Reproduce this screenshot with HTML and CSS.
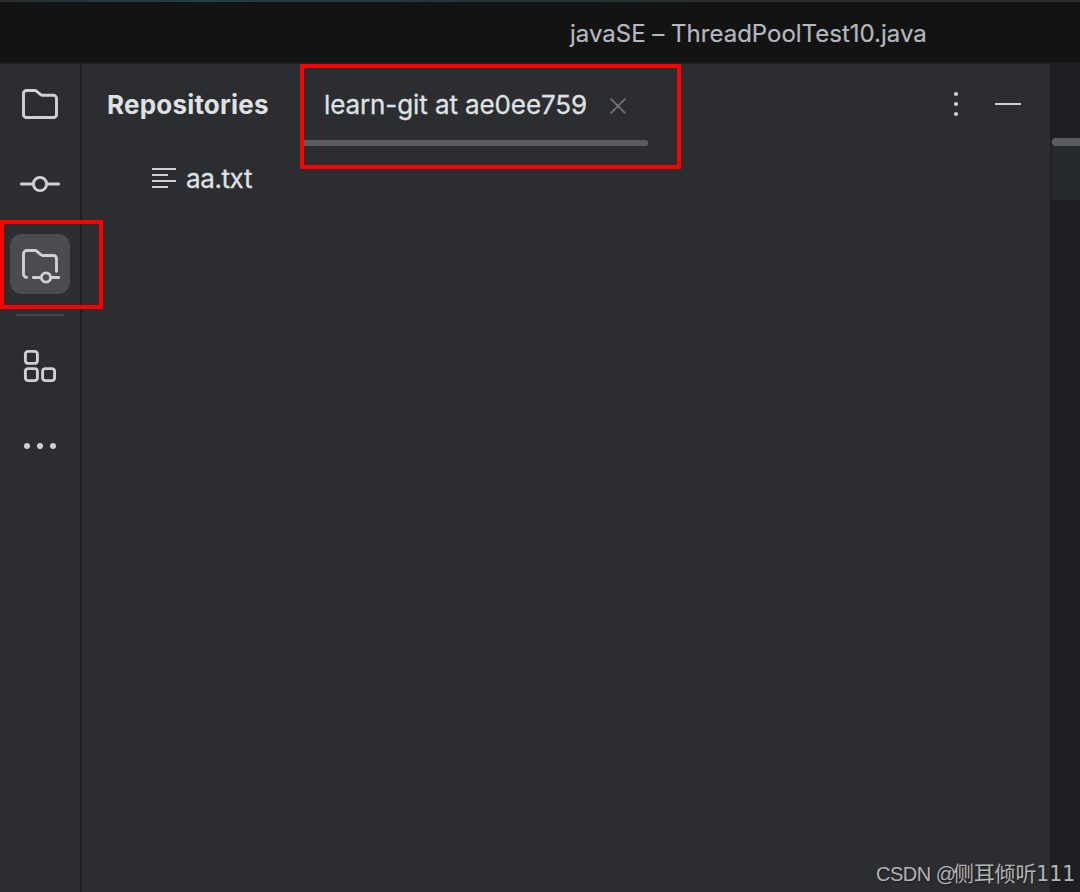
FILE: index.html
```html
<!DOCTYPE html>
<html lang="en">
<head>
<meta charset="utf-8">
<title>javaSE – ThreadPoolTest10.java</title>
<link rel="stylesheet" href="styles.css">
</head>
<body>
<div class="window">
  <header class="titlebar"><span class="title">javaSE – ThreadPoolTest10.java</span></header>
  <div class="workspace">
    <nav class="toolstrip">
      <div class="tool"><svg width="40" height="40" viewBox="0 0 40 40"><path d="M3.5 9.500a3 3 0 0 1 3-3h8.200a3 3 0 0 1 2 .8l4 3.300a3 3 0 0 0 1.800.7h11a3 3 0 0 1 3 3v16.200a3 3 0 0 1-3 3h-27a3 3 0 0 1-3-3z"/></svg></div>
      <div class="tool"><svg width="40" height="40" viewBox="0 0 40 40"><path d="M1.300 20H13M27 20h11.700"/><circle cx="20" cy="20" r="6.600"/></svg></div>
      <div class="tool selected"><svg width="40" height="40" viewBox="0 0 40 40"><path d="M6.700 33.400a3.500 3.500 0 0 1-3.200-3.600V9.800a3.300 3.300 0 0 1 3.300-3.300h8.100a3 3 0 0 1 2 .8l4.200 3.500a2.500 2.500 0 0 0 1.700.7h10.700a3 3 0 0 1 3 3v12.800M13.300 33.500h7M31.500 33.500h7.200"/><circle cx="26" cy="33.500" r="4.600"/></svg></div>
      <div class="separator"></div>
      <div class="tool"><svg width="40" height="40" viewBox="0 0 40 40"><rect x="5.400" y="5.400" width="12" height="12" rx="2.700"/><rect x="5.400" y="22.600" width="12" height="12" rx="2.700"/><rect x="22.600" y="22.600" width="12" height="12" rx="2.700"/></svg></div>
      <div class="tool"><svg class="solid" width="40" height="40" viewBox="0 0 40 40"><circle cx="7" cy="20" r="3"/><circle cx="20" cy="20" r="3"/><circle cx="33" cy="20" r="3"/></svg></div>
    </nav>
    <main class="panel">
      <div class="panel-header">
        <h1 class="heading">Repositories</h1>
        <div class="tab">
          <span class="tab-label">learn-git at ae0ee759</span>
          <svg class="close" width="16" height="16" viewBox="0 0 16 16"><path d="M1.200 1.200l13.600 13.600M14.800 1.200L1.200 14.800"/></svg>
        </div>
        <div class="actions">
          <svg class="solid" width="8" height="28" viewBox="0 0 8 28"><circle cx="4" cy="4" r="2.100"/><circle cx="4" cy="14" r="2.100"/><circle cx="4" cy="24" r="2.100"/></svg>
          <div class="minimize"></div>
        </div>
      </div>
      <div class="file">
        <svg class="file-icon" width="24" height="20" viewBox="0 0 24 20"><path d="M0 1h24M0 7h16M0 13h24M0 19h16"/></svg>
        <span class="file-name">aa.txt</span>
      </div>
    </main>
    <aside class="editor"><div class="editor-tab"></div></aside>
  </div>
  <div class="mark mark-tool"></div>
  <div class="mark mark-tab"></div>
  <div class="watermark"><span class="wm-latin">CSDN @</span><span class="wm-name">侧耳倾听</span><span class="wm-digits">111</span></div>
</div>
</body>
</html>
```
FILE: styles.css
```css
* { box-sizing: border-box; }
body { margin: 0; background: #2b2d30; }
.window { position: relative; width: 1080px; height: 892px; overflow: hidden; display: flex; flex-direction: column; font-family: Inter, "Liberation Sans", sans-serif; font-feature-settings: "calt" 0; white-space: nowrap; color: #dfe1e5; }
.titlebar { height: 64px; flex: none; padding: 3px 0 0 570px; background: linear-gradient(90deg, #2b2d30, #214144 200px, #263739 400px, #2b2d30 750px) 0 0 / 100% 2px no-repeat, linear-gradient(#1e1f22, #1e1f22) 0 62px / 100% 2px no-repeat, #131313; }
.title { display: block; font-size: 24px; line-height: 62px; color: #b4b8bf; font-weight: 400; -webkit-text-stroke: 0.2px #b4b8bf; }
.workspace { flex: 1; display: flex; }
.toolstrip { width: 82px; flex: none; border-right: 2px solid #1e1f22; display: flex; flex-direction: column; align-items: center; padding-top: 10px; gap: 20px; }
.tool { width: 60px; height: 60px; border-radius: 12px; display: grid; place-items: center; }
.selected { background: #4a4c4f; }
.separator { width: 48px; height: 2px; background: #43454a; }
svg { display: block; fill: none; stroke: #ced0d6; stroke-width: 2.900; stroke-linecap: round; stroke-linejoin: round; }
.solid { fill: #ced0d6; stroke: none; }
.panel { width: 968px; flex: none; }
.panel-header { height: 82px; display: flex; align-items: flex-start; }
.heading { width: 193px; margin: 0 0 0 25px; font-size: 26px; letter-spacing: 0.2px; line-height: 82px; font-weight: 700; }
.tab { width: 348px; height: 82px; padding-left: 24px; display: flex; align-items: center; background: radial-gradient(circle at 0 50%, #5a5c63 3px, transparent 3.500px) 345px 76px / 3px 6px no-repeat, linear-gradient(#5a5c63, #5a5c63) 0 76px / 345px 6px no-repeat; }
.tab-label { width: 286px; font-size: 26px; letter-spacing: -0.1px; line-height: 82px; font-weight: 400; -webkit-text-stroke: 0.3px #dfe1e5; }
.close { stroke: #6f737a; stroke-width: 1.800; position: relative; top: 1px; }
.actions { width: 402px; height: 80px; padding-right: 29px; display: flex; align-items: center; justify-content: flex-end; gap: 35px; }
.minimize { width: 26px; height: 2px; background: #ced0d6; }
.file { height: 64px; padding-left: 70px; display: flex; align-items: center; gap: 10px; }
.file-icon { stroke-width: 2; stroke-linecap: butt; }
.file-name { font-size: 26px; letter-spacing: -0.4px; line-height: 62px; padding-top: 2px; font-weight: 400; -webkit-text-stroke: 0.3px #dfe1e5; }
.editor { width: 30px; padding: 74px 0 0 2px; background: #1e1f22; }
.editor-tab { height: 62px; background: radial-gradient(circle at 4px 4px, #5a5c60 4px, transparent 4.500px) 0 0 / 4px 8px no-repeat, linear-gradient(#5a5c60, #5a5c60) 4px 0 / 24px 8px no-repeat, linear-gradient(#26292e, #26292e) 0 8px / 28px 54px no-repeat; }
.mark { position: absolute; border: 4px solid #ff0000; }
.mark-tool { left: 0; top: 220px; width: 103px; height: 89px; }
.mark-tab { left: 300px; top: 64px; width: 381px; height: 105px; }
.watermark { position: absolute; left: 876px; top: 859px; display: flex; align-items: baseline; font-family: "Liberation Sans", "Noto Sans CJK SC", sans-serif; font-size: 20px; line-height: 30px; color: #b3b4b5; text-shadow: 1px 1px 1px #1b1c1f; }
.wm-latin { width: 77px; letter-spacing: -0.5px; }
.wm-name { font-size: 21px; letter-spacing: -0.2px; }
.wm-digits { font-family: "DejaVu Sans", sans-serif; font-size: 20.500px; }
```
